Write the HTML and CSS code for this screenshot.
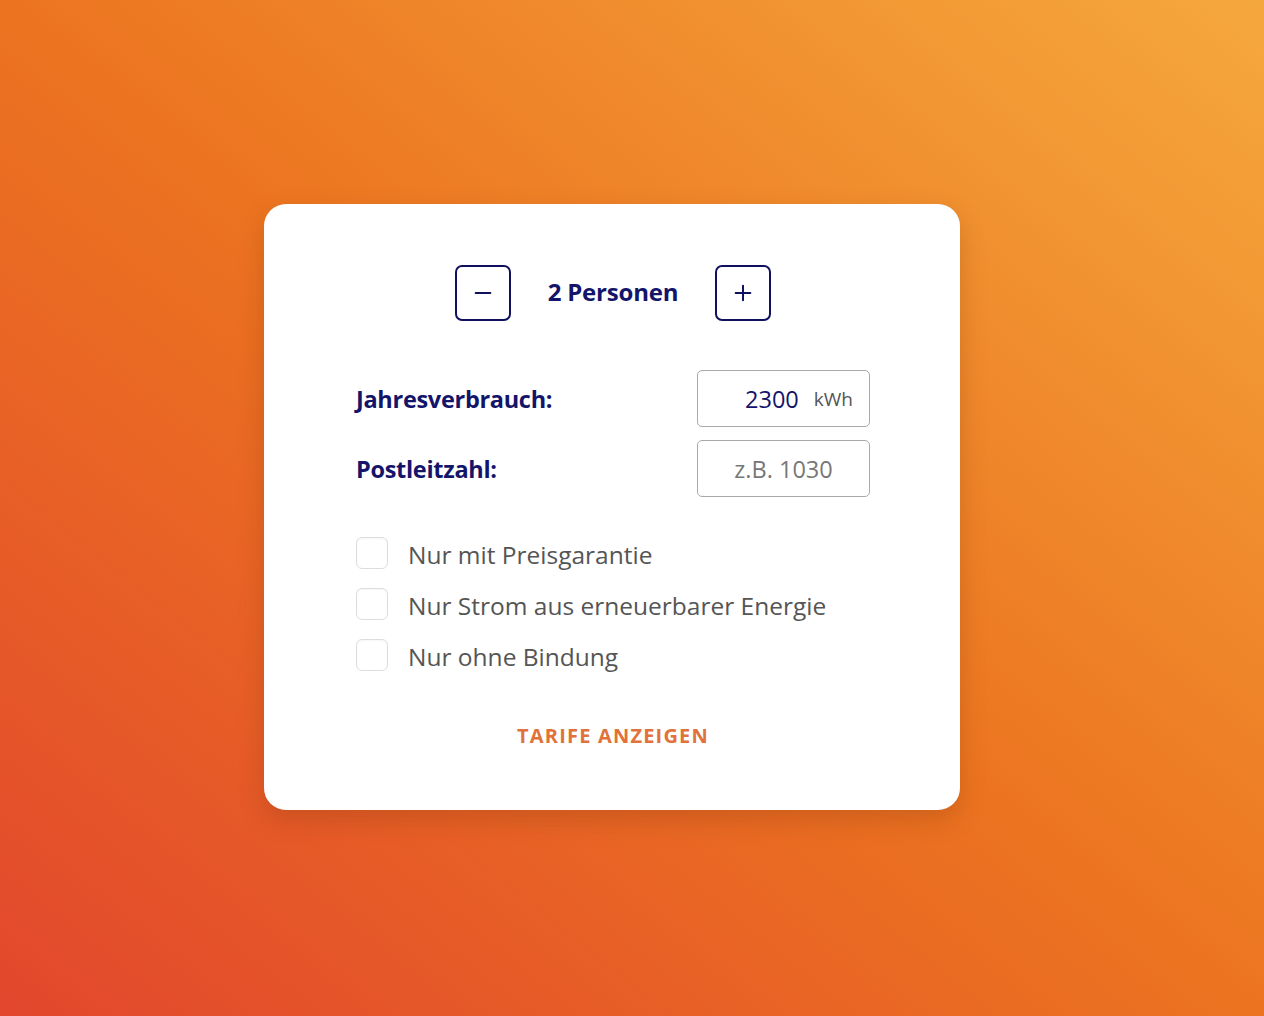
FILE: index.html
```html
<!DOCTYPE html>
<html lang="de">
<head>
<meta charset="utf-8">
<title>Stromrechner</title>
<link rel="stylesheet" href="styles.css">
</head>
<body>
<main class="stage">
  <section class="card">
    <div class="persons">
      <button class="step" aria-label="weniger">
        <svg viewBox="0 0 24 24" width="22" height="22"><path d="M4 12h16" stroke="currentColor" stroke-width="2.2" stroke-linecap="round"/></svg>
      </button>
      <span class="persons-label">2 Personen</span>
      <button class="step" aria-label="mehr">
        <svg viewBox="0 0 24 24" width="22" height="22"><path d="M4 12h16M12 4v16" stroke="currentColor" stroke-width="2.2" stroke-linecap="round"/></svg>
      </button>
    </div>
    <div class="fields">
      <div class="field">
        <label class="field-label">Jahresverbrauch:</label>
        <div class="input">
          <span class="value">2300</span><span class="unit">kWh</span>
        </div>
      </div>
      <div class="field">
        <label class="field-label">Postleitzahl:</label>
        <div class="input input-center">
          <span class="placeholder">z.B. 1030</span>
        </div>
      </div>
    </div>
    <ul class="options">
      <li class="option"><span class="box"></span>Nur mit Preisgarantie</li>
      <li class="option"><span class="box"></span>Nur Strom aus erneuerbarer Energie</li>
      <li class="option"><span class="box"></span>Nur ohne Bindung</li>
    </ul>
    <div class="action">
      <button class="submit">TARIFE ANZEIGEN</button>
    </div>
  </section>
</main>
</body>
</html>
```

FILE: styles.css
```css
* { box-sizing: border-box; }
html, body { margin: 0; height: 100%; }
body {
  font-family: "Open Sans", "Noto Sans", sans-serif;
  background: linear-gradient(to top right, #e2472d 0%, #ec7420 50%, #f5a83d 100%);
}
.stage {
  height: 1016px;
  display: flex;
  align-items: center;
  justify-content: center;
  padding-right: 40px;
  padding-bottom: 2px;
}
.card {
  width: 696px;
  height: 606px;
  background: #fff;
  border-radius: 22px;
  box-shadow: 0 10px 24px rgba(120, 50, 10, 0.25);
  padding: 61px 90px 0 92px;
}
.persons {
  display: flex;
  align-items: center;
  justify-content: center;
  gap: 37px;
}
.step {
  width: 56px;
  height: 56px;
  border: 2px solid #10115e;
  border-radius: 7px;
  background: #fff;
  color: #10115e;
  display: flex;
  align-items: center;
  justify-content: center;
  padding: 0;
}
.persons-label {
  font-weight: 700;
  font-size: 24px;
  color: #13146a;
  letter-spacing: -0.2px;
  margin-top: -3px;
}
.fields {
  margin-top: 49px;
  display: flex;
  flex-direction: column;
  gap: 13px;
}
.field {
  display: flex;
  align-items: center;
  justify-content: space-between;
}
.field-label {
  font-weight: 700;
  font-size: 23.5px;
  color: #13146a;
  letter-spacing: -0.3px;
}
.input {
  width: 173px;
  height: 57px;
  border: 1.5px solid #aaa;
  border-radius: 5px;
  display: flex;
  align-items: center;
  justify-content: flex-end;
  padding-right: 16px;
  gap: 15px;
}
.input-center { justify-content: center; padding-right: 0; }
.value { font-size: 23.5px; color: #13146a; }
.unit { font-size: 19px; color: #555; }
.placeholder { font-size: 23.5px; color: #777; }
.options {
  list-style: none;
  margin: 40px 0 0;
  padding: 0;
  display: flex;
  flex-direction: column;
  gap: 19px;
}
.option {
  display: flex;
  align-items: center;
  gap: 20px;
  height: 32px;
  font-size: 24.5px;
  color: #555;
  padding-top: 2px;
}
.box {
  width: 32px;
  height: 32px;
  border: 1.5px solid #ddd;
  border-radius: 6px;
  background: #fff;
  flex: none;
  margin-top: -2px;
  box-shadow: inset 0 1px 2px rgba(0,0,0,0.04);
}
.action {
  margin-top: 51px;
  display: flex;
  justify-content: center;
}
.submit {
  background: none;
  border: 0;
  font-family: inherit;
  font-weight: 700;
  font-size: 20px;
  letter-spacing: 1.2px;
  color: #e0723a;
  padding: 0;
}
```
